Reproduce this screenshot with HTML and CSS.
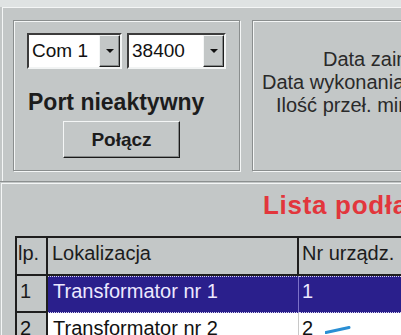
FILE: index.html
```html
<!DOCTYPE html>
<html lang="pl">
<head>
    <meta charset="UTF-8">
    <title>Lista podłączonych urządzeń</title>
    <link rel="stylesheet" href="styles.css">
</head>
<body>

<div class="strip"></div>

<div class="top">
    <div class="group port">
        <div class="combos">
            <div class="combo combo-com">
                <span class="val">Com 1</span>
                <span class="btn"><i class="arrow"></i></span>
            </div>
            <div class="combo combo-baud">
                <span class="val">38400</span>
                <span class="btn"><i class="arrow"></i></span>
            </div>
        </div>
        <div class="status">Port nieaktywny</div>
        <button class="connect">Połącz</button>
    </div>

    <div class="group info">
        <div class="line l1">Data zainstalowania:</div>
        <div class="line l2">Data wykonania pomiaru:</div>
        <div class="line l3">Ilość przeł. min. pomiaru:</div>
    </div>
</div>

<div class="lower">
    <div class="lower-inner">
        <div class="title">Lista podłączonych urządzeń</div>

        <table class="grid">
            <thead>
                <tr>
                    <th class="c-lp">lp.</th>
                    <th class="c-loc">Lokalizacja</th>
                    <th class="c-nr">Nr urządz.</th>
                </tr>
            </thead>
            <tbody>
                <tr class="selected">
                    <td class="c-lp">1</td>
                    <td class="c-loc">Transformator nr 1</td>
                    <td class="c-nr">1</td>
                </tr>
                <tr>
                    <td class="c-lp">2</td>
                    <td class="c-loc">Transformator nr 2</td>
                    <td class="c-nr">2
                        <svg class="mark" width="26" height="8" viewBox="0 0 26 8">
                            <path d="M1 6.5 L24 1.5" stroke="#2a8fd4" stroke-width="3" stroke-linecap="round"/>
                        </svg>
                    </td>
                </tr>
            </tbody>
        </table>
    </div>
</div>

</body>
</html>
```

FILE: styles.css
```css
body {
    margin: 0;
    width: 401px;
    height: 335px;
    overflow: hidden;
    background: #c3c7c7;
    font-family: "Liberation Sans", Arial, sans-serif;
    color: #1c1c1c;
}

.strip {
    height: 7px;
    background: #dfe3e3;
}

.top {
    display: flex;
    gap: 12px;
    margin-left: 2px;
    border-top: 1px solid #f4f6f6;
    border-left: 1px solid #f4f6f6;
    padding: 12px 0 10px 10px;
}

.group {
    box-sizing: border-box;
    height: 151px;
    border: 1px solid #8a8e8e;
    box-shadow: inset 1px 1px 0 #f4f6f6, 1px 1px 0 #f4f6f6;
}

.port {
    flex: 0 0 227px;
    padding: 12px 0 0 13px;
}

.combos {
    display: flex;
    gap: 5px;
}

.combo {
    box-sizing: border-box;
    display: flex;
    height: 36px;
    background: #fff;
    border: 2px solid;
    border-color: #3c3c3c #f2f4f4 #f2f4f4 #3c3c3c;
}

.combo-com {
    width: 95px;
}

.combo-baud {
    width: 99px;
}

.combo .val {
    flex: 1;
    padding-left: 3px;
    font-size: 19px;
    line-height: 32px;
    color: #111;
}

.combo .btn {
    box-sizing: border-box;
    width: 21px;
    display: flex;
    align-items: center;
    justify-content: center;
    background: #c3c7c7;
    border: 1px solid;
    border-color: #f4f6f6 #1e1e1e #1e1e1e #f4f6f6;
    box-shadow: inset -1px -1px 0 #868a8a;
}

.arrow {
    width: 0;
    height: 0;
    border-left: 4px solid transparent;
    border-right: 4px solid transparent;
    border-top: 4px solid #111;
}

.status {
    margin: 20px 0 0 1px;
    font-size: 23px;
    line-height: 27px;
    font-weight: bold;
    white-space: nowrap;
}

.connect {
    display: block;
    width: 117px;
    height: 37px;
    margin: 5px 0 0 36px;
    padding: 0;
    background: #c3c7c7;
    border: 1px solid;
    border-color: #f4f6f6 #1a1a1a #1a1a1a #f4f6f6;
    box-shadow: inset -1px -1px 0 #868a8a;
    font-family: inherit;
    font-size: 19px;
    font-weight: bold;
    color: #1c1c1c;
}

.info {
    flex: 0 0 230px;
    padding-top: 27px;
}

.line {
    font-size: 20px;
    line-height: 23px;
    white-space: nowrap;
    color: #2a2a2a;
}

.l1 { padding-left: 70px; }
.l2 { padding-left: 9px; }
.l3 { padding-left: 23px; }

.lower {
    border-top: 1px solid #8c9090;
    padding-top: 1px;
}

.lower-inner {
    margin-left: 1px;
    border-top: 1px solid #f4f6f6;
    border-left: 1px solid #f4f6f6;
    height: 200px;
}

.title {
    padding: 6px 0 0 261px;
    font-size: 26px;
    line-height: 31px;
    font-weight: bold;
    letter-spacing: 0.7px;
    color: #e2363c;
    white-space: nowrap;
}

.grid {
    margin: 15px 0 0 13px;
    border-collapse: separate;
    border-spacing: 0;
    table-layout: fixed;
    width: 432px;
    border-top: 2px solid #1e1e1e;
    border-left: 2px solid #1e1e1e;
    font-size: 20px;
    line-height: 22px;
}

.grid th,
.grid td {
    box-sizing: border-box;
    padding: 4px 0 0 4px;
    vertical-align: top;
    text-align: left;
    font-weight: normal;
    white-space: nowrap;
    overflow: visible;
}

.grid th {
    height: 38px;
    background: #c3c7c7;
    border-right: 2px solid #1e1e1e;
    border-bottom: 2px solid #1e1e1e;
    color: #1c1c1c;
}

.grid .c-lp { width: 31px; padding-left: 1px; }
.grid .c-loc { width: 251px; }
.grid .c-nr { width: 150px; padding-left: 3px; }

.grid td {
    height: 37px;
    background: #fff;
    border-right: 1px solid #c8c8c8;
    color: #111;
}

.grid td.c-lp {
    background: #c3c7c7;
    border-right: 2px solid #1e1e1e;
    border-bottom: 2px solid #1e1e1e;
    padding-left: 3px;
}

.grid td.c-loc {
    padding-left: 5px;
}

.selected td {
    background: #2a1f8c;
    color: #ece8ff;
    border-right-color: #7c72c8;
    border-top: 1px dotted #d6d2f0;
    border-bottom: 1px dotted #d6d2f0;
    padding-top: 3px;
}

.selected td.c-lp {
    background: #c3c7c7;
    color: #1c1c1c;
    border-top: none;
    border-bottom: 2px solid #1e1e1e;
    padding-top: 4px;
}

.grid td.c-nr {
    position: relative;
}

.mark {
    position: absolute;
    left: 26px;
    top: 13px;
}
```
